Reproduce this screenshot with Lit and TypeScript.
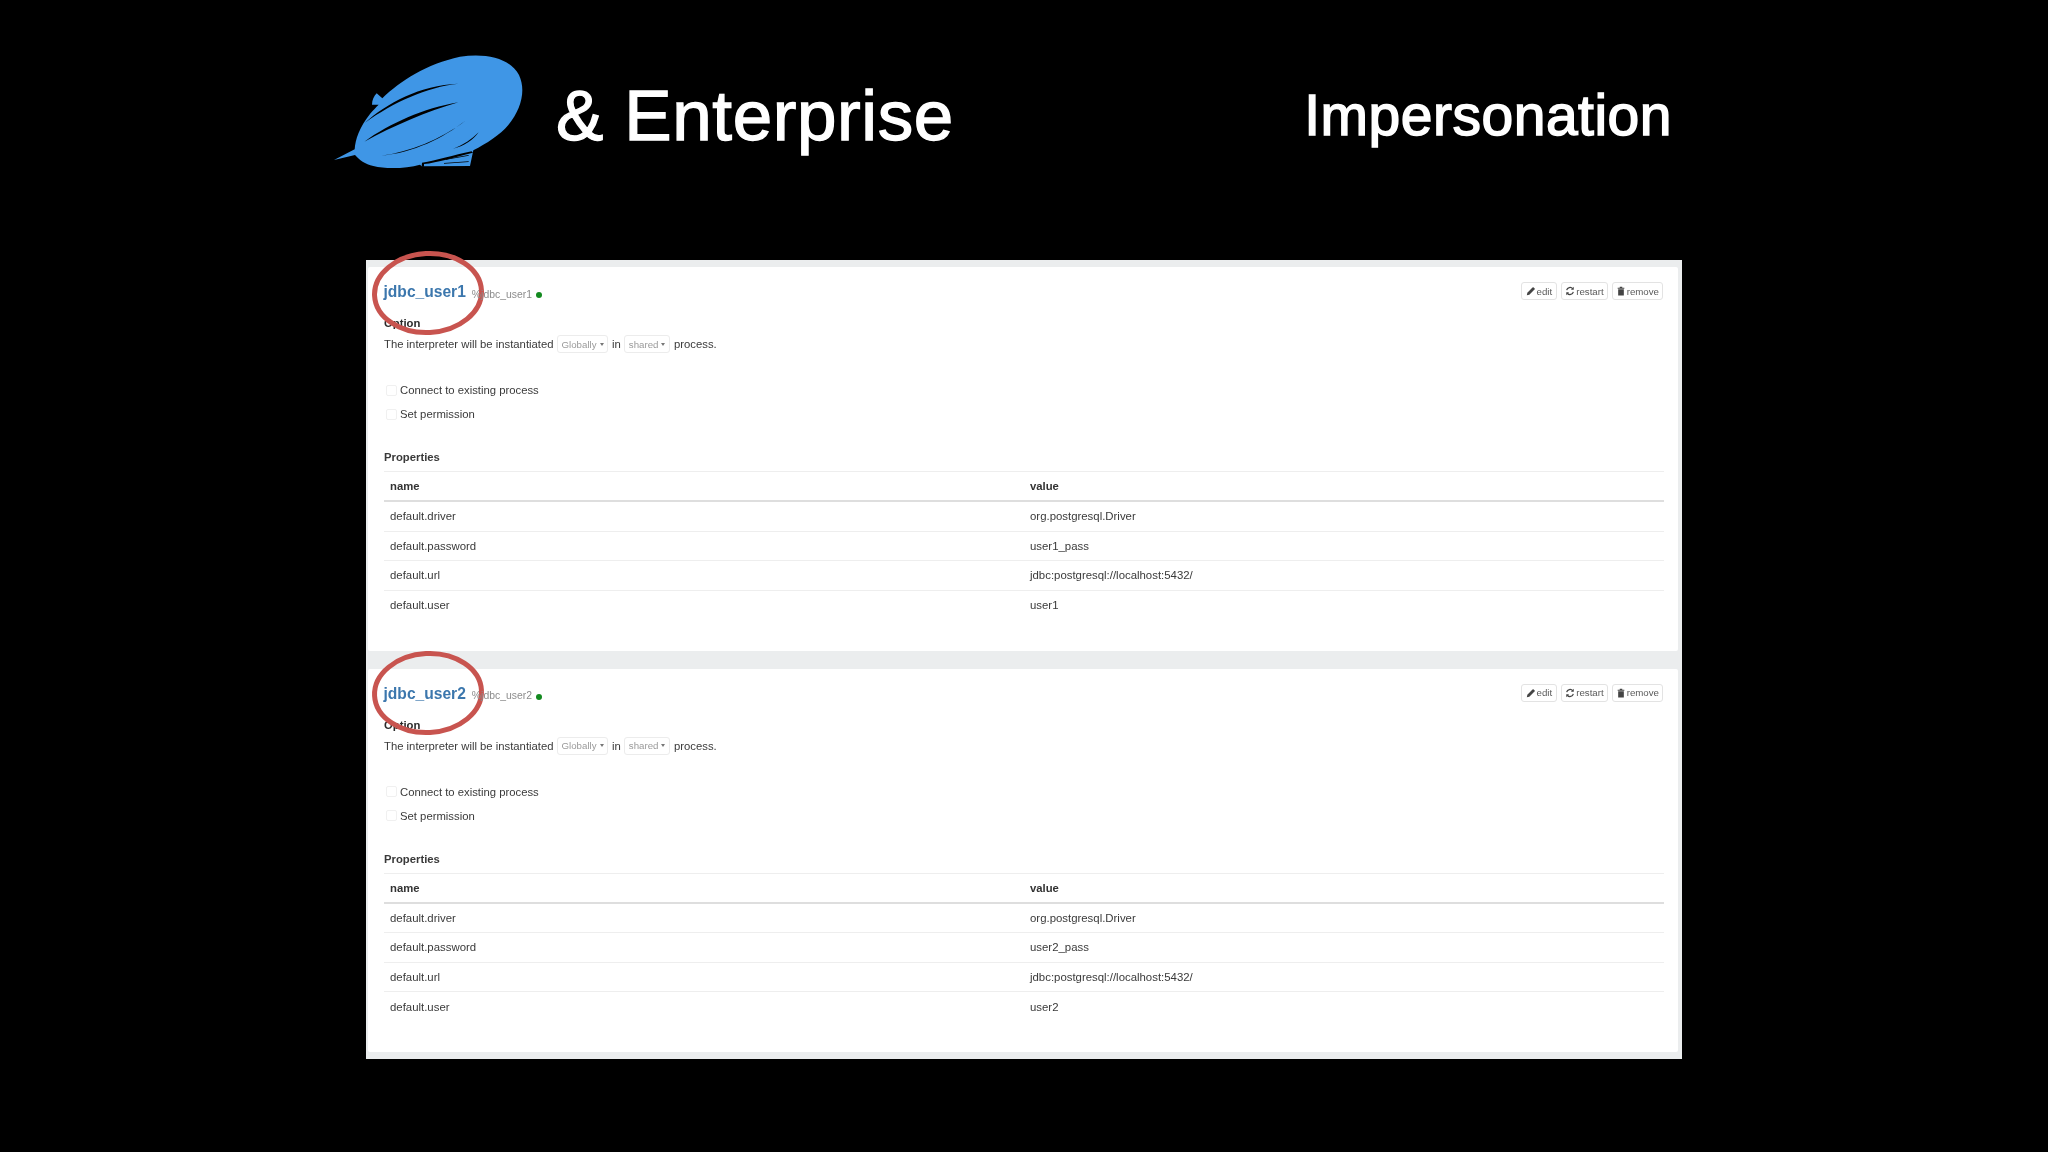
import { LitElement, html, css, svg } from "lit";
import { customElement } from "lit/decorators.js";

const pencil = svg`<svg class="ic" viewBox="0 0 12 12"><path d="M1 11l.6-3L7.8 1.8a1 1 0 0 1 1.4 0l1 1a1 1 0 0 1 0 1.4L4 10.4z" fill="#444"/></svg>`;
const refresh = svg`<svg class="ic" viewBox="0 0 12 12"><path d="M2 5a4.2 4.2 0 0 1 7.3-1.7M10 7a4.2 4.2 0 0 1-7.3 1.7" fill="none" stroke="#444" stroke-width="1.5"/><path d="M10.5 1v3.4H7.1zM1.5 11V7.6h3.4z" fill="#444"/></svg>`;
const trash = svg`<svg class="ic" viewBox="0 0 12 12"><path d="M2 2.2h8V3.4H2zM4.5 1h3v1.2h-3zM2.6 4h6.8v7.4H2.6z" fill="#444"/></svg>`;

interface Prop { name: string; value: string; }

@customElement("app-root")
export class AppRoot extends LitElement {
  static styles = css`
    :host { display: block; width: 2048px; height: 1152px; background: #000; overflow: hidden;
      font-family: "Liberation Sans", Arial, sans-serif; }
    .header { display: flex; align-items: flex-start; height: 260px; box-sizing: border-box;
      padding: 40px 376px 0 320px; color: #fff; }
    .logo { width: 220px; height: 140px; flex: none; display: block; }
    .enterprise { font-size: 71px; line-height: 80px; margin: 36px 0 0 16px; letter-spacing: 0.6px;
      -webkit-text-stroke: 1.3px #fff; white-space: nowrap; }
    .imp { margin: 40px 0 0 auto; font-size: 57px; line-height: 70px; letter-spacing: 0.5px;
      -webkit-text-stroke: 1.5px #fff; white-space: nowrap; }
    .panel { margin-left: 366px; width: 1316px; box-sizing: border-box; height: 799px;
      background: #ebedee; padding: 7px 4px 7px 2px; display: flex; flex-direction: column; gap: 18px; filter: blur(0.45px); }
    .card { position: relative; height: 384px; box-sizing: border-box; background: #fff; border-radius: 2px;
      padding: 15px 14px 0 16px; color: #3a3a3a; font-size: 11.3px; }
    .ring { position: absolute; left: 4px; top: -16px; width: 112px; height: 84px; overflow: visible; pointer-events: none; }
    .ring.second { top: -18px; }
    .head { display: flex; align-items: center; height: 20px; }
    .title { font-size: 15.6px; font-weight: 700; color: #3c77ad; margin-left: -0.5px; }
    .sub { margin-left: 6px; font-size: 10.4px; color: #8c8c8c; position: relative; top: 2px; }
    .dot { width: 6px; height: 6px; border-radius: 50%; background: #138a1f; margin-left: 4px; position: relative; top: 3px; }
    .btns { margin-left: auto; display: flex; gap: 4px; margin-right: 1px; margin-top: -2px; }
    .btn { display: flex; align-items: center; gap: 1px; height: 18px; box-sizing: border-box; padding: 0 3px;
      border: 1px solid #e3e3e3; border-radius: 3px; font-size: 9.7px; color: #5a5a5a; }
    .btn.edit { padding: 0 4px; }
    .ic { width: 10px; height: 10px; flex: none; }
    .option { margin-top: 14px; height: 14px; line-height: 14px; font-weight: 700; color: #2a2a2a; font-size: 11.3px; }
    .line { margin-top: 5px; height: 18px; display: flex; align-items: center; white-space: nowrap; }
    .sel { display: inline-flex; align-items: center; gap: 3px; height: 18px; box-sizing: border-box; padding: 0 3.5px;
      border: 1px solid #ececec; border-radius: 3px; color: #9a9a9a; font-size: 9.7px; margin: 0 4px 0 3.5px; }
    .caret { width: 0; height: 0; border-left: 2.5px solid transparent; border-right: 2.5px solid transparent; border-top: 3px solid #777; }
    .checks { margin-top: 28px; display: flex; flex-direction: column; gap: 6px; }
    .check { height: 18px; display: flex; align-items: center; gap: 3px; padding-left: 2px; }
    .box { width: 11px; height: 11px; box-sizing: border-box; border: 1px solid #f0f0f0; border-radius: 2px; }
    .props { margin-top: 24px; height: 20px; line-height: 20px; font-weight: 700; font-size: 11.3px; color: #3a3a3a; }
    .table { margin-top: 4px; border-top: 1px solid #eeeeee; font-size: 11.4px; }
    .row { display: grid; grid-template-columns: 640px 1fr; height: 29.6px; box-sizing: border-box; align-items: center;
      padding-left: 6px; border-bottom: 1px solid #eeeeee; }
    .row.th { font-weight: 700; border-bottom: 2px solid #dedede; color: #333; height: 30px; font-size: 11.3px; }
    .row.last { border-bottom: none; padding-bottom: 1px; }
  `;

  private card(n: number, rows: Prop[]) {
    return html`<section class="card">
      <svg class="ring ${n === 2 ? "second" : ""}" viewBox="0 0 112 84"><ellipse cx="56" cy="42" rx="53.5" ry="39.5" transform="rotate(-3 56 42)" fill="none" stroke="#c8544f" stroke-width="5"/></svg>
      <div class="head">
        <span class="title">jdbc_user${n}</span>
        <span class="sub">%jdbc_user${n}</span>
        <span class="dot"></span>
        <div class="btns">
          <span class="btn edit">${pencil}edit</span>
          <span class="btn">${refresh}restart</span>
          <span class="btn">${trash}remove</span>
        </div>
      </div>
      <div class="option">Option</div>
      <div class="line">The interpreter will be instantiated
        <span class="sel">Globally<i class="caret"></i></span>in<span class="sel">shared<i class="caret"></i></span>process.</div>
      <div class="checks">
        <div class="check"><span class="box"></span>Connect to existing process</div>
        <div class="check"><span class="box"></span>Set permission</div>
      </div>
      <div class="props">Properties</div>
      <div class="table">
        <div class="row th"><span>name</span><span>value</span></div>
        ${rows.map((r, i) => html`<div class="row ${i === rows.length - 1 ? "last" : ""}"><span>${r.name}</span><span>${r.value}</span></div>`)}
      </div>
    </section>`;
  }

  private rows(n: number): Prop[] {
    return [
      { name: "default.driver", value: "org.postgresql.Driver" },
      { name: "default.password", value: `user${n}_pass` },
      { name: "default.url", value: "jdbc:postgresql://localhost:5432/" },
      { name: "default.user", value: `user${n}` },
    ];
  }

  render() {
    return html`
      <header class="header">
        <svg class="logo" viewBox="0 0 660 420">
          <path fill="#3f96e6" d="M42 360 L104 328 C106 298 118 262 150 222 C158 212 168 202 176 194 L156 194 C156 180 162 168 170 160 L187 175 C240 122 320 72 420 50 C500 38 570 55 597 105 C618 150 605 205 565 255 C540 285 500 310 460 331 L450 378 L305 379 L300 374 C260 385 200 388 160 378 C135 372 118 360 105 345 Z"/>
          <g fill="#000">
            <path d="M135 248 C200 190 300 135 415 131 C320 141 220 187 135 248Z"/>
            <path d="M133 305 C210 250 310 205 415 187 C320 214 220 258 133 305Z"/>
            <path d="M183 347 C270 335 360 300 436 242 C370 294 280 338 183 347Z"/>
            <path d="M400 326 C430 315 455 298 476 277 C460 300 430 320 400 326Z"/>
            <path d="M305 380 L306 368 C350 362 400 345 455 334 L459 338 C410 350 350 368 312 372 L312 380Z"/>
            <path d="M378 357 L446 345 L446 347 L378 359Z M372 369 L446 364 L446 366 L372 371Z"/>
          </g>
        </svg>
        <div class="enterprise">&amp; Enterprise</div>
        <div class="imp">Impersonation</div>
      </header>
      <main class="panel">
        ${this.card(1, this.rows(1))}
        ${this.card(2, this.rows(2))}
      </main>`;
  }
}
